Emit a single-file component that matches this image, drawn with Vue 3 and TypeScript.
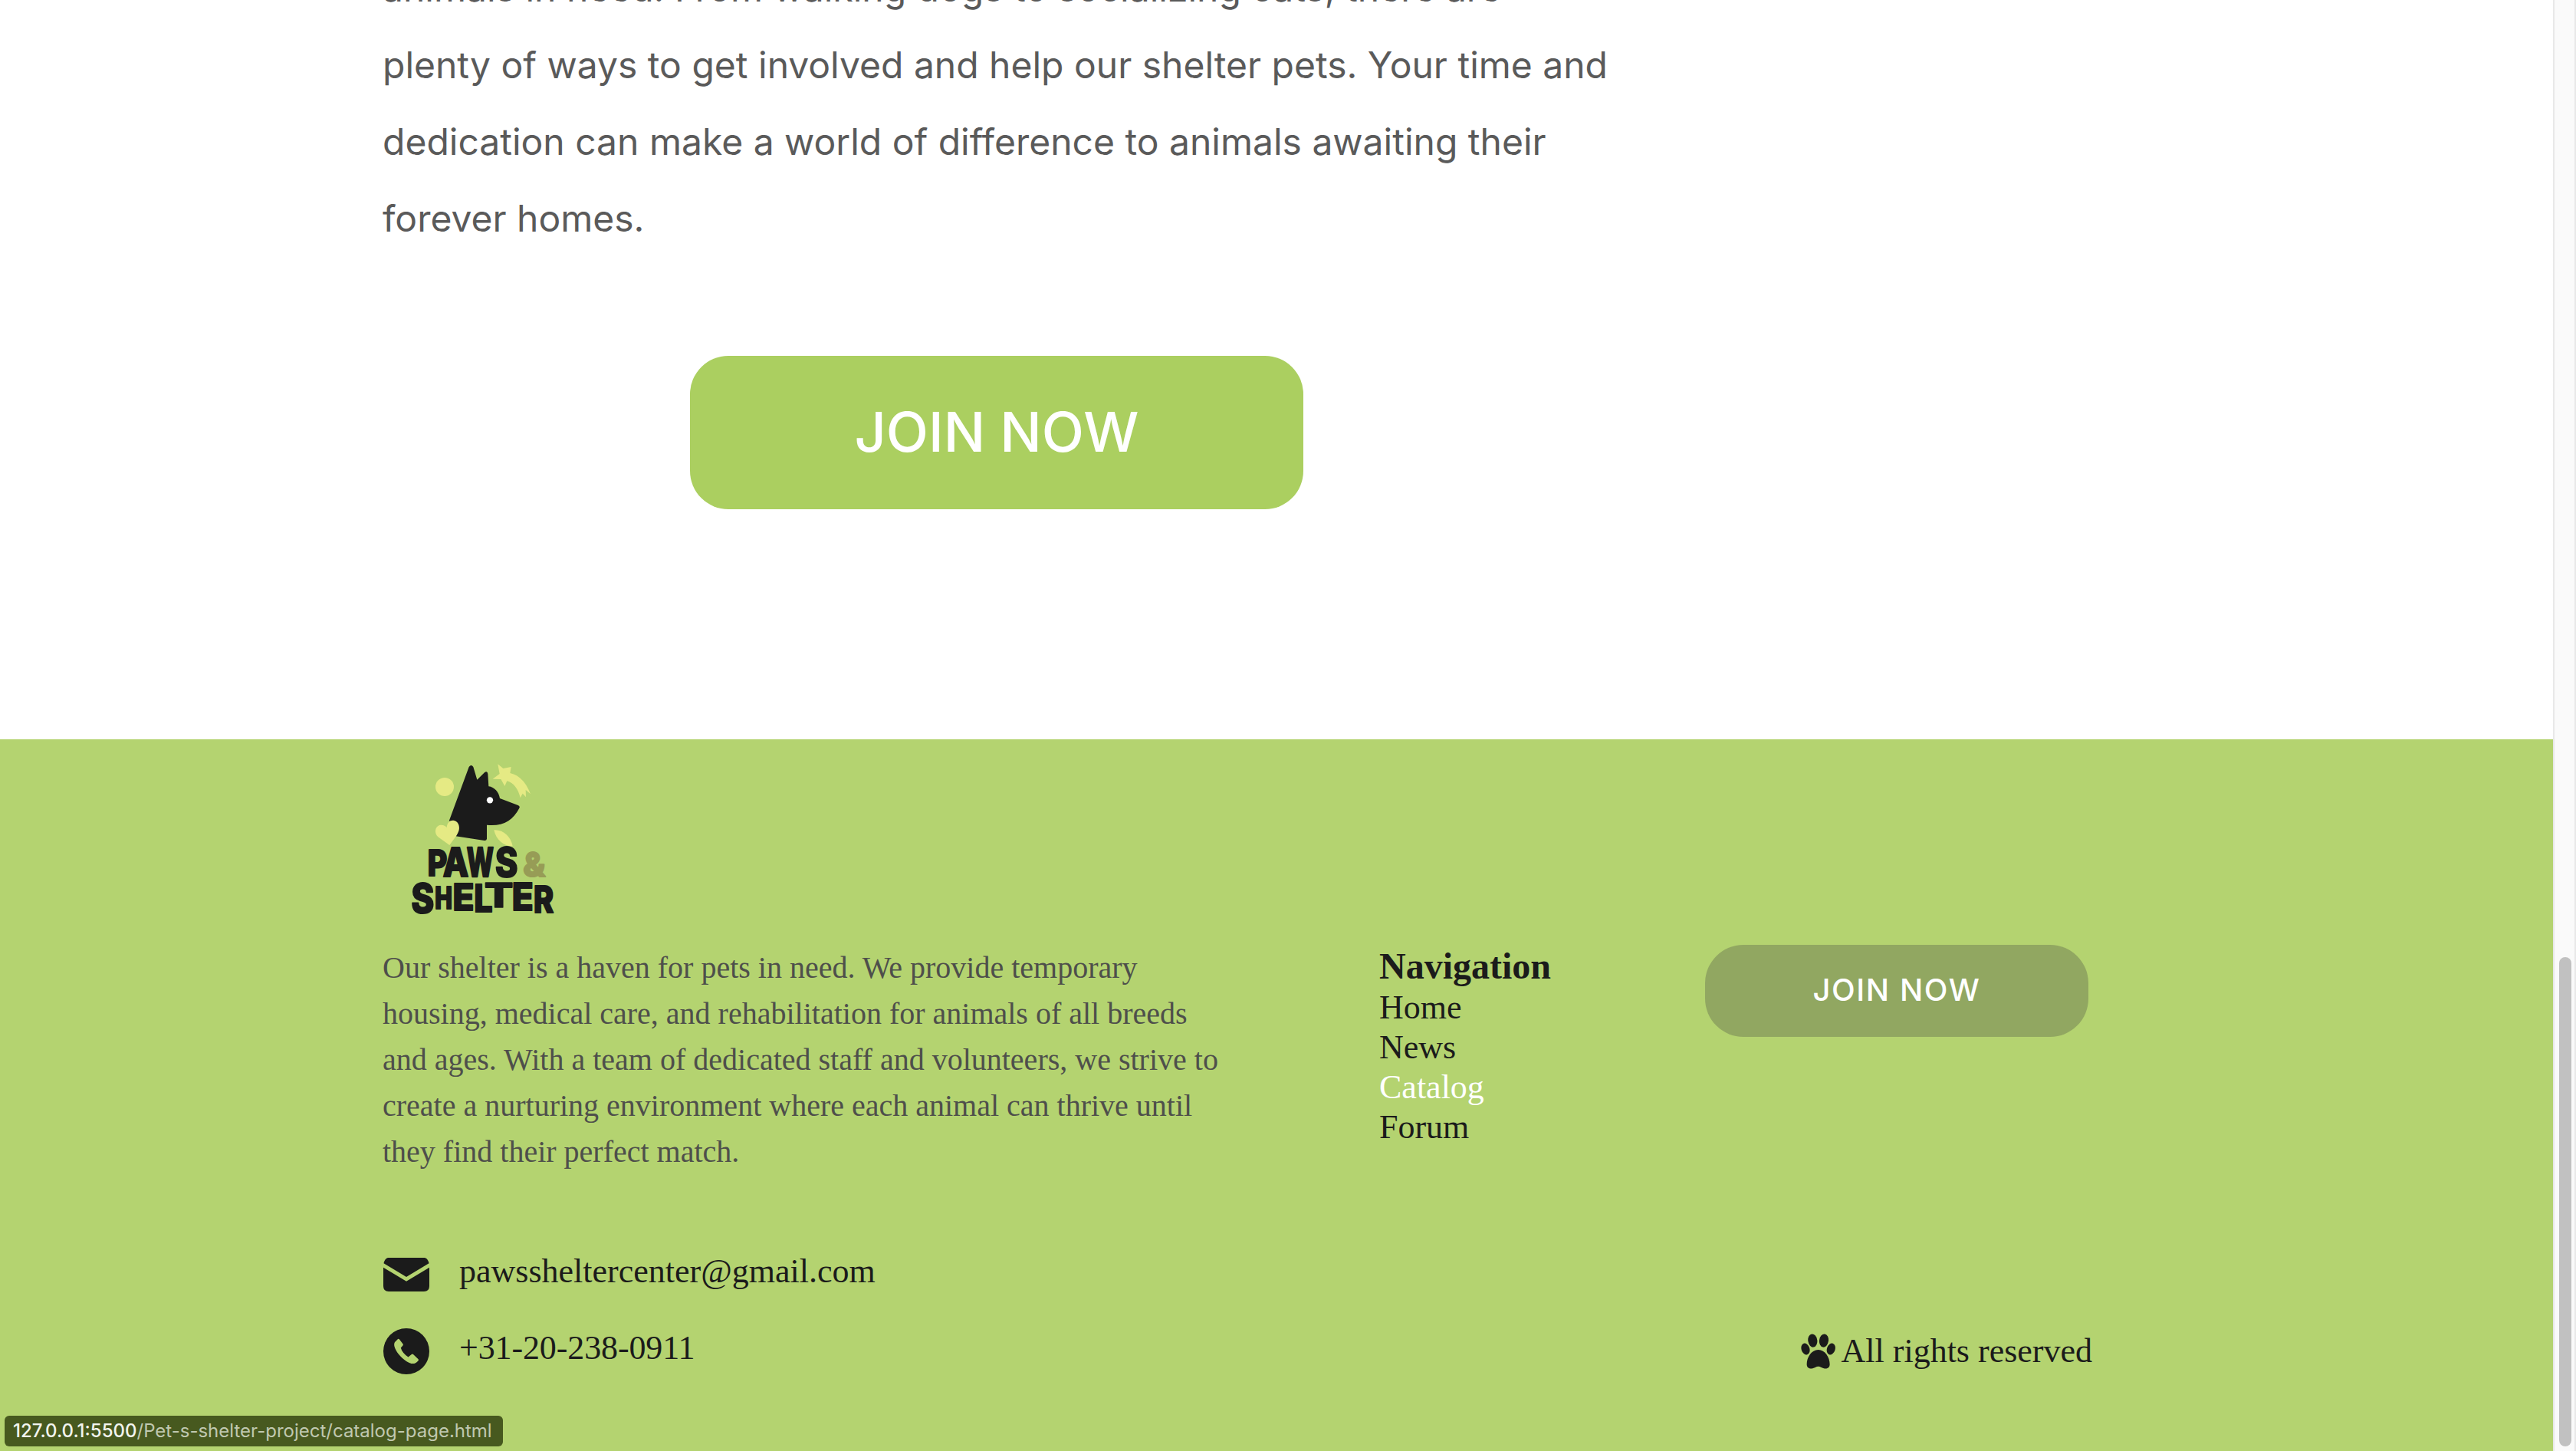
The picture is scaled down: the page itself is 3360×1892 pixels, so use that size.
<script setup lang="ts">
interface NavLink {
  label: string
  active?: boolean
}

interface Letter {
  char: string
  left: number
  right: number
  top: number
  bottom: number
  tilt?: number
}

const links: NavLink[] = [
  { label: 'Home' },
  { label: 'News' },
  { label: 'Catalog', active: true },
  { label: 'Forum' },
]

// Ink bounds of each glyph at 100px: left, right, descent, ascent
const glyphs: Record<string, [number, number, number, number]> = {
  P: [5, 62, 0, 73],
  A: [1.6, 74.5, 0, 73],
  W: [1.6, 104, 0, 73],
  S: [3.5, 62, 1.2, 74],
  '&': [3.5, 68, 1.2, 74],
  H: [5, 70, 0, 73],
  E: [5, 56, 0, 73],
  L: [5, 54, 0, 73],
  T: [3.5, 65, 0, 73],
  R: [5, 65, 0, 73],
}

// The wordmark is set letter by letter for its uneven, hand-cut look
const letters: Letter[] = [
  { char: 'P', left: 176, right: 249, top: 411, bottom: 520 },
  { char: 'A', left: 232, right: 333, top: 402, bottom: 521 },
  { char: 'W', left: 325, right: 433, top: 404, bottom: 523 },
  { char: 'S', left: 440, right: 524, top: 400, bottom: 524 },
  { char: '&', left: 548, right: 636, top: 420, bottom: 524 },
  { char: 'S', left: 111, right: 196, top: 541, bottom: 666 },
  { char: 'H', left: 203, right: 268, top: 555, bottom: 647 },
  { char: 'E', left: 275, right: 351, top: 541, bottom: 653 },
  { char: 'L', left: 358, right: 427, top: 548, bottom: 661 },
  { char: 'T', left: 399, right: 507, top: 542, bottom: 643 },
  { char: 'E', left: 507, right: 583, top: 541, bottom: 654 },
  { char: 'R', left: 591, right: 668, top: 552, bottom: 662 },
]

const STROKE = 3

function place(l: Letter): string {
  const [gl, gr, gd, ga] = glyphs[l.char]
  const sx = (l.right - l.left - STROKE * 2) / (gr - gl)
  const sy = (l.bottom - l.top - STROKE * 2) / (ga + gd)
  const x = l.left + STROKE - gl * sx
  const y = l.bottom - STROKE - gd * sy
  return `translate(${x.toFixed(2)} ${y.toFixed(2)}) scale(${sx.toFixed(4)} ${sy.toFixed(4)})`
}
</script>

<template>
  <div class="window">
    <div class="page">
      <main class="volunteer">
        <p class="volunteer-text">
          animals in need. From walking dogs to socializing cats, there are<br />
          plenty of ways to get involved and help our shelter pets. Your time and<br />
          dedication can make a world of difference to animals awaiting their<br />
          forever homes.
        </p>
        <button class="join join-large">JOIN NOW</button>
      </main>

      <footer class="footer">
        <svg class="logo" viewBox="0 0 780 720">
          <path
            fill="#1b1b1b"
            d="M335 90Q344 78 352 90L367 140L396 112Q407 104 409 117L412 166C434 169 452 188 456 213L527 240Q536 244 532 251C508 300 464 324 405 317V371Q404 379 395 378L283 361L258 299Z"
          />
          <circle cx="417" cy="220" r="12.5" fill="#fff" />
          <g fill="#e5ea84">
            <circle cx="240" cy="168" r="36" />
            <path d="M259 396L214 364C198 349 202 323 220 318C233 315 243 321 248 327C250 308 260 298 274 299C292 301 300 320 296 337C292 355 275 374 259 396Z" />
            <path d="M433 337C470 335 498 362 506 400C474 402 441 377 433 337Z" />
            <path d="M448 79L469 96L500 90L496 114C532 122 558 150 576 196L557 180L558 208L545 194L536 211C528 178 512 153 484 145L475 165L460 138L428 137L455 117Z" />
          </g>
          <text
            v-for="(l, i) in letters"
            :key="i"
            class="letter"
            :class="{ ampersand: l.char === '&' }"
            :transform="place(l)"
          >{{ l.char }}</text>
        </svg>

        <div class="columns">
          <p class="about">
            Our shelter is a haven for pets in need. We provide temporary<br />
            housing, medical care, and rehabilitation for animals of all breeds<br />
            and ages. With a team of dedicated staff and volunteers, we strive to<br />
            create a nurturing environment where each animal can thrive until<br />
            they find their perfect match.
          </p>
          <nav class="nav">
            <h3 class="nav-title">Navigation</h3>
            <ul class="nav-list">
              <li v-for="link in links" :key="link.label" :class="{ active: link.active }">{{ link.label }}</li>
            </ul>
          </nav>
          <button class="join join-small">JOIN NOW</button>
        </div>

        <div class="bottom">
          <address class="contacts">
            <div class="contact">
              <svg viewBox="0 0 60 44" width="60" height="44">
                <path d="M.5 7.3C1.5 2.5 4 0 7 0H53C56 0 58.5 2.5 59.5 7.3L30 25Z" />
                <path d="M0 12.7L30 30.7L60 12.7V37Q60 44 53 44H7Q0 44 0 37Z" />
              </svg>
              <span>pawssheltercenter@gmail.com</span>
            </div>
            <div class="contact">
              <svg viewBox="0 0 60 60" width="60" height="60">
                <circle cx="30" cy="30" r="30" />
                <path
                  fill="#b4d370"
                  d="M15.5 17.5L19 14Q20 13.4 20.8 14.3L25.6 20.5Q26.2 21.3 25.6 22.2L22.8 25.5Q24.5 32 32.5 37.6L36.5 34.2Q38 33 39 34L45.6 40.3Q46.3 41.2 45.6 42.2C41 47.5 36.5 47 30 43C22 37.5 16 30 14.3 23C14 20.5 14.3 18.8 15.5 17.5Z"
                />
              </svg>
              <span class="phone">+31-20-238-0911</span>
            </div>
          </address>
          <div class="rights">
            <svg class="paw" viewBox="0 0 136 138">
              <ellipse cx="46" cy="27" rx="18" ry="26" transform="rotate(-8 46 27)" />
              <ellipse cx="90" cy="27" rx="18" ry="26" transform="rotate(8 90 27)" />
              <ellipse cx="18" cy="60" rx="16" ry="23" transform="rotate(-18 18 60)" />
              <ellipse cx="118" cy="60" rx="16" ry="23" transform="rotate(18 118 60)" />
              <path d="M68 63C94 63 113 92 113 120C113 134 101 139 90 136C80 133 76 128 68 128C60 128 56 133 46 136C35 139 23 134 23 120C23 92 42 63 68 63Z" />
            </svg>
            <span>All rights reserved</span>
          </div>
        </div>
      </footer>
    </div>

    <div class="scrollbar">
      <div class="thumb"></div>
    </div>

    <div class="status"><b>127.0.0.1:5500</b>/Pet-s-shelter-project/catalog-page.html</div>
  </div>
</template>

<style scoped>
.window {
  position: relative;
  display: flex;
  width: 3360px;
  height: 1892px;
  overflow: hidden;
  background: #fff;
}
.page {
  width: 3330px;
}
.volunteer {
  box-sizing: border-box;
  height: 964px;
  padding-left: 499px;
  overflow: hidden;
  font-family: Inter, sans-serif;
}
.volunteer-text {
  margin: -65px 0 0;
  font-size: 48px;
  line-height: 100px;
  color: #5a5a5a;
  white-space: nowrap;
}
.join {
  display: block;
  padding: 0;
  border: 0;
  border-radius: 50px;
  color: #fff;
  font-family: Inter, sans-serif;
  font-weight: 500;
}
.join-large {
  width: 800px;
  height: 200px;
  margin: 129px 0 0 401px;
  padding-bottom: 4px;
  background: #abcf60;
  font-size: 72px;
}
.join-small {
  width: 500px;
  height: 120px;
  padding-bottom: 3px;
  background: #91a761;
  font-size: 40px;
  letter-spacing: 1.6px;
}
.footer {
  box-sizing: border-box;
  height: 928px;
  padding: 6px 0 0 499px;
  background: #b4d370;
  color: #1b1b1b;
  font-family: "Liberation Serif", serif;
  font-size: 44px;
  line-height: 52px;
}
.logo {
  display: block;
  width: 260px;
  height: 240px;
  margin-left: 1px;
}
.letter {
  fill: #1b1b1b;
  stroke: #1b1b1b;
  stroke-width: 2px;
  stroke-linejoin: round;
  vector-effect: non-scaling-stroke;
  font-family: Inter, sans-serif;
  font-size: 100px;
  font-weight: 800;
}
.ampersand {
  fill: #979c56;
  stroke: #979c56;
}
.columns {
  display: flex;
  align-items: flex-start;
  height: 376px;
  padding-top: 22px;
}
.about {
  width: 1300px;
  margin: 0;
  color: #4e4f4b;
  font-size: 40px;
  line-height: 60px;
}
.nav {
  width: 425px;
}
.nav-title {
  margin: 0;
  font-size: 48px;
  line-height: 56px;
}
.nav-list {
  margin: 0;
  padding: 0;
  list-style: none;
}
.active {
  color: #fff;
}
.bottom {
  display: flex;
  justify-content: space-between;
  width: 2230px;
}
.contacts {
  font-style: normal;
}
.contact {
  display: flex;
  align-items: center;
  gap: 39px;
  height: 100px;
}
.contact svg {
  margin: 8px 0 0 1px;
  fill: #1b1b1b;
}
.phone {
  letter-spacing: -0.12px;
}
.rights {
  display: flex;
  align-items: flex-start;
  gap: 7px;
  padding-top: 94px;
}
.rights span {
  line-height: 120px;
}
.paw {
  width: 45.3px;
  height: 46px;
  margin-top: 37px;
  fill: #1b1b1b;
}
.scrollbar {
  box-sizing: border-box;
  width: 30px;
  padding: 1248px 0 0 6px;
  background: #fafafa;
  border: solid #e8e8e8;
  border-width: 0 2px;
}
.thumb {
  width: 16px;
  height: 638px;
  border-radius: 8px;
  background: #c1c1c1;
}
.status {
  position: absolute;
  left: 6px;
  top: 1846px;
  box-sizing: border-box;
  width: 650px;
  height: 40px;
  padding-left: 11px;
  border-radius: 6px;
  background: #47591f;
  color: #c0c8b0;
  font: 400 24px/39px Inter, sans-serif;
  white-space: nowrap;
}
.status b {
  color: #f2f4ee;
  font-weight: 500;
}
</style>
